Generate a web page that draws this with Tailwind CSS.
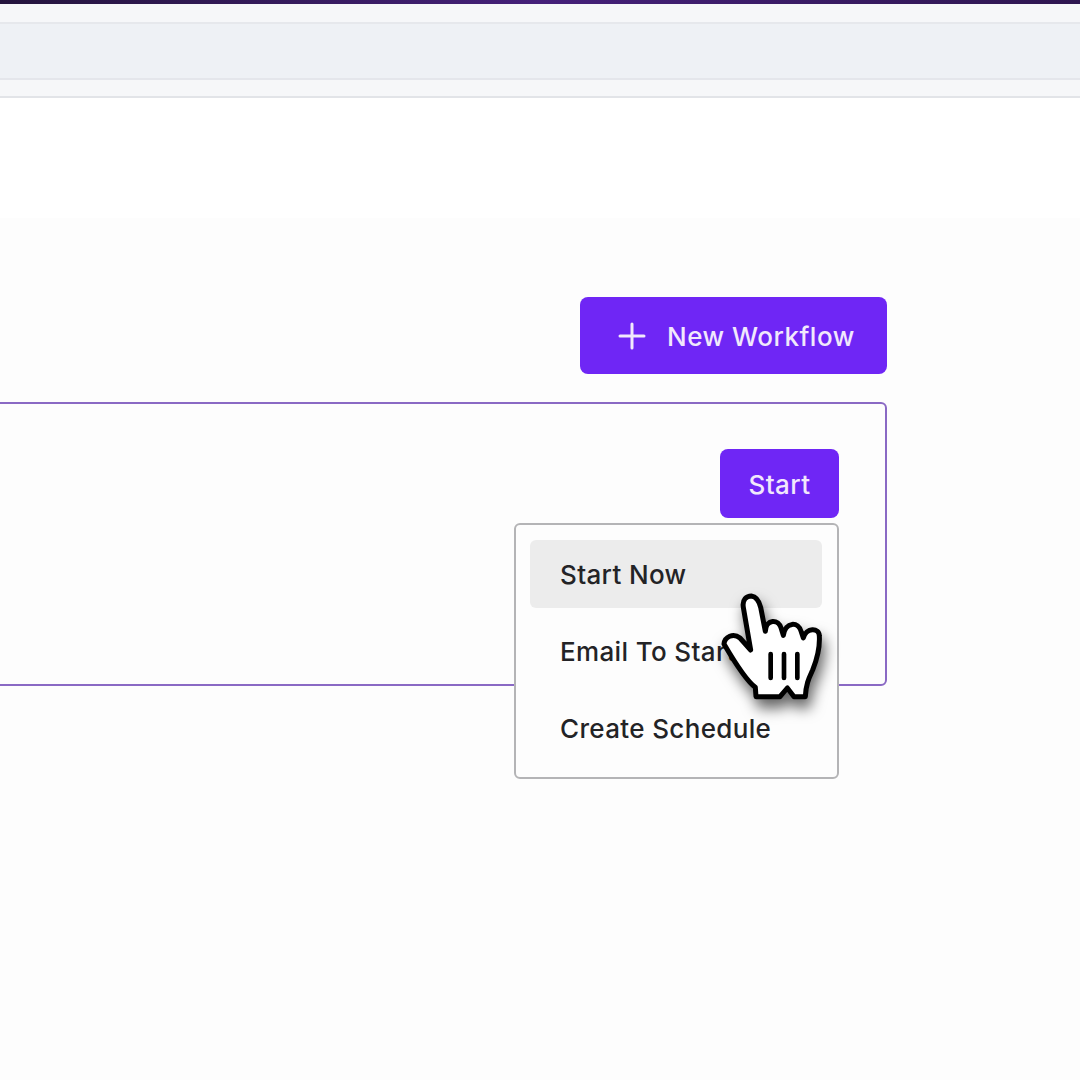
<!DOCTYPE html>
<html>
  <head>
    <meta name="viewport" content="width=device-width, initial-scale=1" />
    <title>Workflows</title>
    <script src="https://cdn.jsdelivr.net/npm/@tailwindcss/browser@4"></script>
  </head>
  <body>
    <div class="relative flex h-[1080px] w-[1080px] flex-col overflow-hidden bg-white" style='font-family: Inter, "Noto Sans", sans-serif;'>
      <div class="h-1 bg-gradient-to-r from-[#24143d] via-[#45207a] to-[#2e1650]"></div>
      <div class="h-5 border-b-2 border-[#e6e8ec] bg-[#f6f7f9]"></div>
      <div class="h-14 border-b-2 border-[#e4e6eb] bg-[#eef1f5]"></div>
      <div class="h-[18px] border-b-2 border-[#e2e4e8] bg-[#f6f7f9]"></div>
      <div class="h-[120px] bg-white"></div>

      <div class="flex flex-1 flex-col items-end bg-[#fdfdfd] pt-[79px] pr-[193px]">
        <button class="flex h-[77px] w-[307px] items-center gap-[21px] rounded-lg bg-[#6f26f5] pl-[38px] text-[26px] font-medium tracking-[0.5px] text-[#f1e8fc]">
          <svg width="28" height="28" viewBox="0 0 28 28" fill="none" stroke="currentColor" stroke-width="3" stroke-linecap="round">
            <path d="M14 2v24M2 14h24"></path>
          </svg>
          <span class="pt-px">New Workflow</span>
        </button>

        <div class="relative mt-7 flex h-[284px] w-[900px] justify-end rounded-md border-2 border-[#8a69c4] pt-[45px] pr-[46px]">
          <button class="h-[69px] w-[119px] rounded-lg bg-[#6f26f5] pt-px text-[26px] font-medium tracking-[0.4px] text-[#f1e8fc]">Start</button>

          <div class="absolute top-[119px] right-[46px] flex h-[256px] w-[325px] flex-col rounded-md border-2 border-[#b4b4b6] bg-[#fdfdfd] py-[15px] pr-[15px] pl-[14px] text-[26px] font-medium tracking-[0.35px] text-[#232326]">
            <div class="flex h-[68px] items-center rounded-md bg-[#ececec] pl-[30px]">Start Now</div>
            <div class="mt-[9px] flex h-[68px] items-center pl-[30px]">Email To Start</div>
            <div class="mt-[9px] flex h-[68px] items-center pl-[30px]">Create Schedule</div>
          </div>
        </div>
      </div>

      <!-- cursor -->
      <svg class="absolute top-[570px] left-[700px] drop-shadow-[3px_9px_7px_rgba(0,0,0,0.6)]" width="150" height="150" viewBox="0 0 450 450">
        <path d="M72 222C74 200 100 188 120 204L152 240L130 112C126 88 140 78 154 78C170 80 178 96 182 112L196 184C198 146 236 146 244 176L250 196C256 154 296 154 304 186L310 204C318 172 358 172 358 198C360 232 350 270 338 300C328 322 318 340 316 380L282 380L262 354L240 380L168 380L166 352C136 330 100 270 72 222Z" fill="#fff" stroke="#000" stroke-width="15" stroke-linejoin="round"></path>
        <path d="M212 252V324M252 252V324M292 252V324" fill="none" stroke="#000" stroke-width="14" stroke-linecap="round"></path>
      </svg>
    </div>
  </body>
</html>
